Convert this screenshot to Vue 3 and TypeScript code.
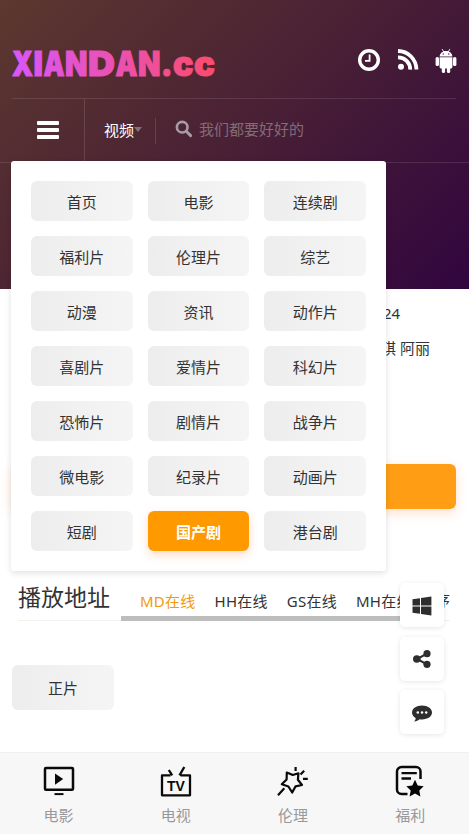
<script setup lang="ts">
import { ref } from 'vue'

interface Letter {
  char: string
  x: number
  width: number
}

const letters: Letter[] = [
  { char: 'X', x: 0, width: 21 },
  { char: 'I', x: 21.5, width: 9.5 },
  { char: 'A', x: 31.500, width: 21 },
  { char: 'N', x: 53, width: 22.5 },
  { char: 'D', x: 76, width: 27 },
  { char: 'A', x: 103.500, width: 22 },
  { char: 'N', x: 126, width: 22.5 },
  { char: '.', x: 149, width: 11.500 },
  { char: 'c', x: 161, width: 20.5 },
  { char: 'c', x: 182, width: 21 },
]

const categories: string[] = [
  '首页', '电影', '连续剧',
  '福利片', '伦理片', '综艺',
  '动漫', '资讯', '动作片',
  '喜剧片', '爱情片', '科幻片',
  '恐怖片', '剧情片', '战争片',
  '微电影', '纪录片', '动画片',
  '短剧', '国产剧', '港台剧',
]
const activeCategory = ref('国产剧')

const sources: string[] = ['MD在线', 'HH在线', 'GS在线', 'MH在线']
const activeSource = ref('MD在线')
</script>

<template>
  <div class="page">
    <header class="hero">
      <div class="topbar">
        <svg class="logo" width="210" height="40" viewBox="0 0 210 40">
          <defs>
            <linearGradient id="logoFill" gradientUnits="userSpaceOnUse" x1="0" y1="0" x2="204" y2="0">
              <stop offset="0" stop-color="#d957f8" />
              <stop offset="1" stop-color="#fb4c6c" />
            </linearGradient>
          </defs>
          <text
            v-for="(l, i) in letters"
            :key="i"
            class="logo-text"
            y="32"
            :x="l.x"
            :textLength="l.width"
            lengthAdjust="spacingAndGlyphs"
            fill="url(#logoFill)"
            stroke="url(#logoFill)"
          >{{ l.char }}</text>
        </svg>
        <div class="actions">
          <svg width="24" height="24" viewBox="0 0 24 24">
            <circle cx="12" cy="12" r="9.3" fill="none" stroke="#fff" stroke-width="3.4" />
            <path d="M12.6 6.400v6.400H8" fill="none" stroke="#fff" stroke-width="1.800" />
          </svg>
          <svg width="22" height="24" viewBox="0 0 22 24">
            <circle cx="4" cy="18.800" r="3" fill="#fff" />
            <path d="M1 9.400A12 12 0 0 1 13.200 21.600M1 3A18.600 18.600 0 0 1 19.400 21.600" fill="none" stroke="#fff" stroke-width="3.800" />
          </svg>
          <svg width="22" height="26" viewBox="0 0 22 26">
            <g fill="#fff">
              <path d="M4.600 8.600C4.800 5.300 7.400 3 11 3s6.200 2.300 6.400 5.600z" />
              <path d="M4.600 9.200h12.800V19a1.600 1.600 0 0 1-1.600 1.600H6.200A1.600 1.600 0 0 1 4.600 19z" />
              <rect x="0.600" y="9" width="3.400" height="9" rx="1.600" />
              <rect x="18" y="9" width="3.400" height="9" rx="1.600" />
              <rect x="6.800" y="17" width="3.300" height="8" rx="1.600" />
              <rect x="11.900" y="17" width="3.300" height="8" rx="1.600" />
            </g>
            <path d="M7.300 1.400l1.500 2.500M14.700 1.400l-1.500 2.500" stroke="#fff" stroke-width="0.900" stroke-linecap="round" />
            <circle cx="8.200" cy="6" r="0.700" fill="#46183a" />
            <circle cx="13.800" cy="6" r="0.700" fill="#46183a" />
          </svg>
        </div>
      </div>
      <nav class="navbar">
        <button class="burger" type="button">
          <span></span><span></span><span></span>
        </button>
        <div class="kind"><span>视频</span><i class="caret"></i></div>
        <div class="search">
          <svg width="18" height="18" viewBox="0 0 18 18">
            <circle cx="7.200" cy="7.200" r="5.300" fill="none" stroke="currentColor" stroke-width="2.600" />
            <path d="M11.300 11.300L15.600 15.600" stroke="currentColor" stroke-width="2.900" stroke-linecap="round" />
          </svg>
          <span>我们都要好好的</span>
        </div>
      </nav>
    </header>

    <main class="content">
      <div class="facts">
        <p class="fact year">24</p>
        <p class="fact">琪 阿丽</p>
      </div>
      <div class="play"></div>
      <section class="playlist">
        <div class="heading">
          <h2>播放地址</h2>
          <div class="tabs">
            <a v-for="s in sources" :key="s" :class="{ on: s === activeSource }" @click="activeSource = s">{{ s }}</a>
          </div>
          <span class="order">序</span>
        </div>
        <a class="chip episode">正片</a>
      </section>
    </main>

    <div class="menu">
      <a
        v-for="c in categories"
        :key="c"
        class="chip"
        :class="{ active: c === activeCategory }"
        @click="activeCategory = c"
      >{{ c }}</a>
    </div>

    <aside class="floats">
      <a>
        <svg width="20" height="20" viewBox="0 0 20 20" fill="#2e2e2e">
          <path d="M0.500 3.300L8 2.200v7.200H0.500zM9 2.050L19.400 0.500v8.900H9zM0.500 10.400H8v7.300L0.500 16.700zM9 10.400h10.400v9L9 17.900z" />
        </svg>
      </a>
      <a>
        <svg width="20" height="20" viewBox="0 0 20 20">
          <path d="M15 4.600L5 10l10 5.400" fill="none" stroke="#2e2e2e" stroke-width="2.200" />
          <g fill="#2e2e2e">
            <circle cx="15" cy="4.700" r="3.600" />
            <circle cx="4.800" cy="10" r="3.800" />
            <circle cx="15" cy="15.300" r="3.600" />
          </g>
        </svg>
      </a>
      <a>
        <svg width="20" height="20" viewBox="0 0 20 20">
          <path d="M10 2.500C4.300 2.500 0 5.500 0 9.500c0 2.400 1.500 4.400 3.800 5.700-.2 1.200-.8 2.200-1.700 3.200 2.300-.3 4.200-1.100 5.500-2.200.8.200 1.600.2 2.400.2 5.700 0 10-3 10-6.900S15.700 2.500 10 2.500z" fill="#2e2e2e" />
          <g fill="#fff">
            <circle cx="5.800" cy="9.500" r="1.250" /><circle cx="10" cy="9.500" r="1.250" /><circle cx="14.200" cy="9.500" r="1.250" />
          </g>
        </svg>
      </a>
    </aside>

    <footer class="tabbar">
      <a>
        <svg width="32" height="32" viewBox="0 0 32 32">
          <rect x="2" y="3" width="28" height="21.800" rx="1" fill="none" stroke="#0a0a0a" stroke-width="2.500" />
          <path d="M12 8.400v11.400l8.200-5.700z" fill="#0a0a0a" />
          <path d="M11.500 29.100h9" stroke="#0a0a0a" stroke-width="2" />
        </svg>
        <span>电影</span>
      </a>
      <a>
        <svg width="32" height="32" viewBox="0 0 32 32">
          <path d="M10.500 10.400H2V30.300h28V10.400h-9.500M8.800 5l3.400 5.400M24.300 2l-4.800 8.400" fill="none" stroke="#0a0a0a" stroke-width="2.300" stroke-linejoin="round" />
          <text class="tv" x="16" y="25.500" text-anchor="middle">TV</text>
        </svg>
        <span>电视</span>
      </a>
      <a>
        <svg width="32" height="32" viewBox="0 0 32 32">
          <g fill="none" stroke="#0a0a0a" stroke-width="2.200" stroke-linejoin="round">
            <path d="M9.800 7.500l6 2.500 5.600-1.700-.5 6.500 4.100 5.200-6.400 1.300-3.400 6.200-3.800-6-6.600-2.200 4.800-4.800z" />
            <path d="M7.300 23.200L1 30.200M18.600 2.100v4M27.200 5.700l-3.700 3.800M26 13.800h4.800" />
          </g>
        </svg>
        <span>伦理</span>
      </a>
      <a>
        <svg width="32" height="32" viewBox="0 0 32 32">
          <path d="M26.500 14V6.500a4.500 4.500 0 0 0-4.500-4.500H7.500A4.500 4.500 0 0 0 3 6.500v18A4.500 4.500 0 0 0 7.500 29h6" fill="none" stroke="#0a0a0a" stroke-width="2.500" />
          <path d="M7.500 8.200h15.300M7.500 13.500h9.500" stroke="#0a0a0a" stroke-width="2.300" />
          <path d="M21 14.800l2.700 5.600 6 .8-4.400 4.200 1.100 6.100-5.400-2.900-5.400 2.900 1.100-6.100-4.400-4.200 6-.8z" fill="#050505" />
        </svg>
        <span>福利</span>
      </a>
    </footer>
  </div>
</template>

<style>
body {
  background: #fff;
}
</style>

<style scoped>
.page {
  position: relative;
  box-sizing: border-box;
  width: 100%;
  height: 834px;
  overflow: hidden;
  background: #fff;
  color: #333;
  font-family: "Noto Sans", "Noto Sans CJK SC", sans-serif;
  font-size: 15px;
}
.hero {
  height: 289px;
  background: linear-gradient(135deg, #5c382f 0%, #481f35 52%, #31053f 100%);
}
.topbar {
  display: flex;
  justify-content: space-between;
  box-sizing: border-box;
  height: 99px;
  margin: 0 13px 0 12px;
  padding-top: 44px;
  border-bottom: 1px solid rgba(255, 255, 255, 0.11);
}
.logo {
  overflow: visible;
}
.logo-text {
  font-family: Inter, sans-serif;
  font-size: 34px;
  font-weight: 900;
  stroke-width: 1;
}
.actions {
  display: flex;
  gap: 16px;
  padding-top: 4px;
  margin-right: -1px;
}
.navbar {
  display: flex;
  align-items: center;
  height: 63px;
  padding-left: 12px;
  border-bottom: 1px solid rgba(255, 255, 255, 0.11);
}
.burger {
  display: flex;
  flex-direction: column;
  align-items: center;
  justify-content: center;
  gap: 3px;
  box-sizing: border-box;
  width: 73px;
  height: 63px;
  padding: 0 0 2px;
  border: 0;
  border-right: 1px solid rgba(255, 255, 255, 0.13);
  background: none;
}
.burger span {
  width: 22px;
  height: 4px;
  border-radius: 1px;
  background: #fff;
}
.kind {
  display: flex;
  align-items: center;
  box-sizing: border-box;
  width: 71px;
  height: 26px;
  padding: 0 0 2px 19px;
  border-right: 1px solid rgba(255, 255, 255, 0.13);
  color: #fff;
}
.caret {
  border: 4px solid transparent;
  border-top: 5px solid #83717a;
  border-bottom: 0;
}
.search {
  display: flex;
  align-items: center;
  gap: 6px;
  padding: 0 0 4px 19px;
}
.search svg {
  color: #a99ba4;
}
.search span {
  color: #836b78;
}
.facts {
  height: 175px;
  padding-left: 381px;
  box-sizing: border-box;
  padding-top: 7px;
}
.fact {
  margin: 0;
  line-height: 35px;
}
.year {
  padding-left: 2px;
}
.play {
  height: 45px;
  margin: 0 13px 0 12px;
  border-radius: 6px;
  background: #ff9e14;
  box-shadow: 0 4px 12px rgba(255, 120, 30, 0.22);
}
.playlist {
  padding: 66px 19px 0 12px;
}
.heading {
  display: flex;
  box-sizing: border-box;
  height: 46px;
  margin-left: 6px;
  border-bottom: 1px solid #f2f2f2;
}
h2 {
  flex: none;
  width: 103px;
  margin: 0;
  font-size: 23px;
  font-weight: 400;
  line-height: 44px;
}
.tabs {
  display: flex;
  flex: none;
  gap: 19px;
  box-sizing: border-box;
  width: 290px;
  height: 46px;
  padding-left: 19px;
  overflow: hidden;
  border-bottom: 5px solid #bdbdbd;
  line-height: 52px;
}
.tabs a {
  flex: none;
  letter-spacing: 0.25px;
}
.tabs .on {
  color: #f39a0b;
}
.order {
  flex: none;
  margin-left: 24px;
  line-height: 50px;
}
.chip {
  display: flex;
  align-items: center;
  justify-content: center;
  height: 40px;
  border-radius: 6px;
  background: linear-gradient(90deg, #ededed, #f5f5f5);
  color: #333;
}
.episode {
  width: 102px;
  height: 45px;
  margin-top: 44px;
}
.menu {
  position: absolute;
  top: 161px;
  left: 11px;
  display: grid;
  grid-template-columns: repeat(3, 1fr);
  gap: 15px;
  box-sizing: border-box;
  width: 375px;
  height: 410px;
  padding: 20px;
  border-radius: 3px;
  background: #fff;
  box-shadow: 0 2px 6px rgba(0, 0, 0, 0.12);
}
.chip.active {
  background: #ff9900;
  color: #fff;
  font-weight: 700;
  box-shadow: 0 4px 10px rgba(255, 120, 30, 0.25);
}
.floats {
  position: absolute;
  top: 583px;
  right: 25px;
  display: flex;
  flex-direction: column;
  gap: 9.500px;
}
.floats a {
  display: flex;
  align-items: center;
  justify-content: center;
  width: 44px;
  height: 44px;
  border-radius: 5px;
  background: #fff;
  box-shadow: 0 1px 5px rgba(0, 0, 0, 0.1);
}
.floats svg {
  margin-top: 1px;
}
.tabbar {
  position: absolute;
  right: 0;
  bottom: 0;
  left: 0;
  display: flex;
  box-sizing: border-box;
  height: 82px;
  padding-top: 12px;
  border-top: 1px solid #f0f0f0;
  background: #f7f7f7;
}
.tabbar a {
  display: flex;
  flex: 1;
  flex-direction: column;
  align-items: center;
  color: #999;
}
.tabbar span {
  margin-top: 6px;
  line-height: 24px;
}
.tv {
  font-family: "Liberation Sans", sans-serif;
  font-size: 14px;
  font-weight: 700;
  fill: #0a0a0a;
}
</style>
